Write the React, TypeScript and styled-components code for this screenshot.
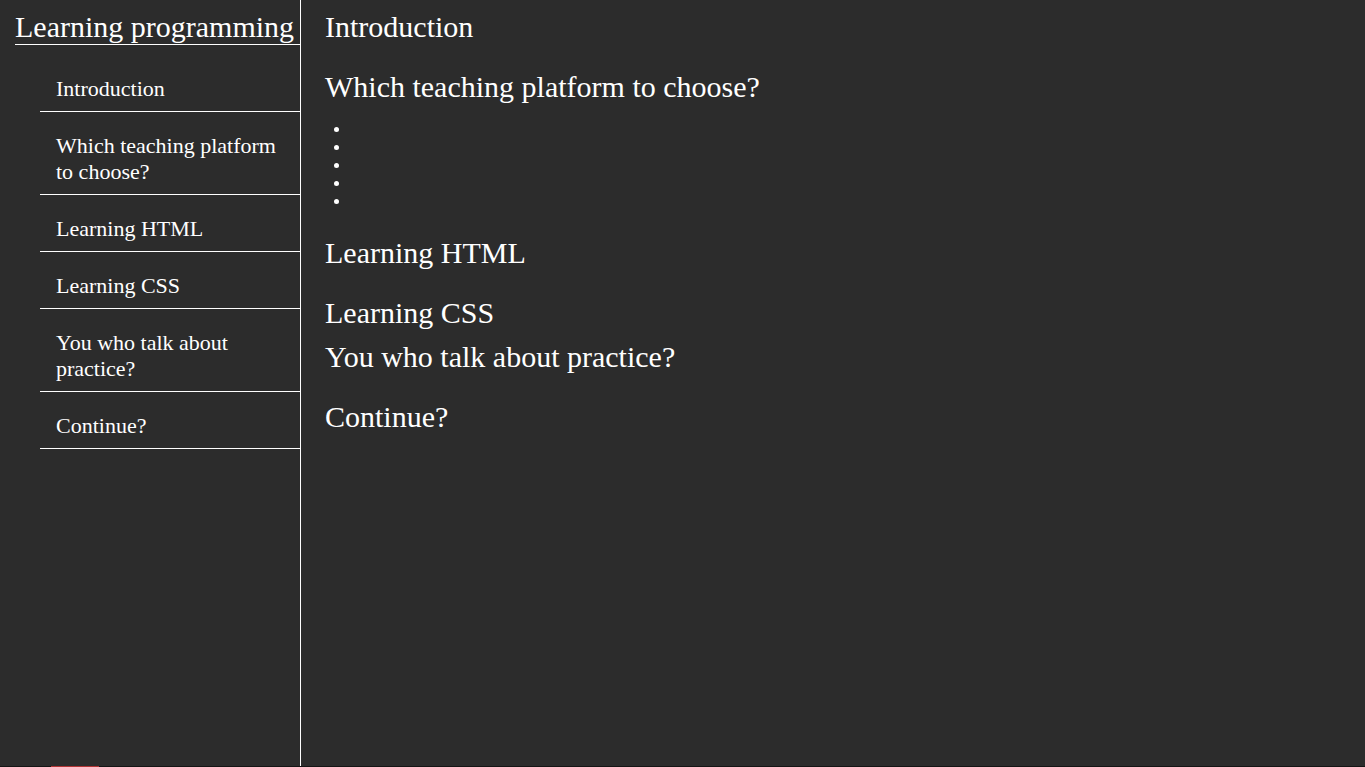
import React from 'react'
import styled, { createGlobalStyle } from 'styled-components'

//Global
const GlobalStyle = createGlobalStyle`
  html, body {
    margin: 0;
    padding: 0;
    background-color: #2c2c2c;
    color: #ffffff;
    font-family: "Liberation Serif", "Times New Roman", serif;
    overflow: hidden;
  }
  * {
    box-sizing: border-box;
  }
`

//Styled Components
const Page = styled.div`
  display: flex;
  flex-direction: column;
  height: 767px;
`

const Layout = styled.div`
  display: flex;
  flex-direction: row;
  height: 766px;
`

const Sidebar = styled.nav`
  width: 301px;
  flex-shrink: 0;
  border-right: 1px solid #ffffff;
  display: flex;
  flex-direction: column;
`

const SidebarTitle = styled.header`
  margin: 10px 0 0 15px;
  font-size: 30px;
  line-height: 34px;
  border-bottom: 1px solid #ffffff;
  white-space: nowrap;
`

const NavList = styled.ul`
  list-style: none;
  margin: 10px 0 0 40px;
  padding: 0;
`

const NavItem = styled.li`
  padding: 21px 16px 9px 16px;
  font-size: 22px;
  line-height: 26px;
  border-bottom: 1px solid #ffffff;
`

const NavLink = styled.a`
  color: #ffffff;
  text-decoration: none;
`

const Main = styled.main`
  flex: 1;
  padding: 10px 0 0 24px;
  display: flex;
  flex-direction: column;
`

const Heading = styled.h2<{ $gap: number }>`
  margin: 0 0 ${(props) => props.$gap}px 0;
  font-size: 30px;
  font-weight: 400;
  line-height: 34px;
`

const DotList = styled.ul`
  list-style: none;
  margin: 0 0 26px 9px;
  padding: 0;
  display: flex;
  flex-direction: column;
`

const Dot = styled.li`
  height: 18px;
  display: flex;
  align-items: center;
  &::before {
    content: '';
    width: 5px;
    height: 5px;
    border-radius: 50%;
    background-color: #ffffff;
  }
`

const BottomBar = styled.div`
  height: 1px;
  background-color: #151515;
  display: flex;
`

const BottomMark = styled.span`
  margin-left: 51px;
  width: 48px;
  height: 1px;
  background-color: #b03434;
`

// Data
const sections = [
  'Introduction',
  'Which teaching platform to choose?',
  'Learning HTML',
  'Learning CSS',
  'You who talk about practice?',
  'Continue?',
]

//React Component
function App() {
  return (
    <Page>
      <GlobalStyle />
      <Layout>
        <Sidebar id="navbar">
          <SidebarTitle>Learning programming</SidebarTitle>
          <NavList>
            {sections.map((title) => (
              <NavItem key={title}>
                <NavLink href={'#' + title.replace(/ /g, '_')}>{title}</NavLink>
              </NavItem>
            ))}
          </NavList>
        </Sidebar>
        <Main id="main-doc">
          <Heading $gap={26}>Introduction</Heading>
          <Heading $gap={16}>Which teaching platform to choose?</Heading>
          <DotList>
            <Dot />
            <Dot />
            <Dot />
            <Dot />
            <Dot />
          </DotList>
          <Heading $gap={26}>Learning HTML</Heading>
          <Heading $gap={10}>Learning CSS</Heading>
          <Heading $gap={26}>You who talk about practice?</Heading>
          <Heading $gap={26}>Continue?</Heading>
        </Main>
      </Layout>
      <BottomBar>
        <BottomMark />
      </BottomBar>
    </Page>
  )
}
export default App
